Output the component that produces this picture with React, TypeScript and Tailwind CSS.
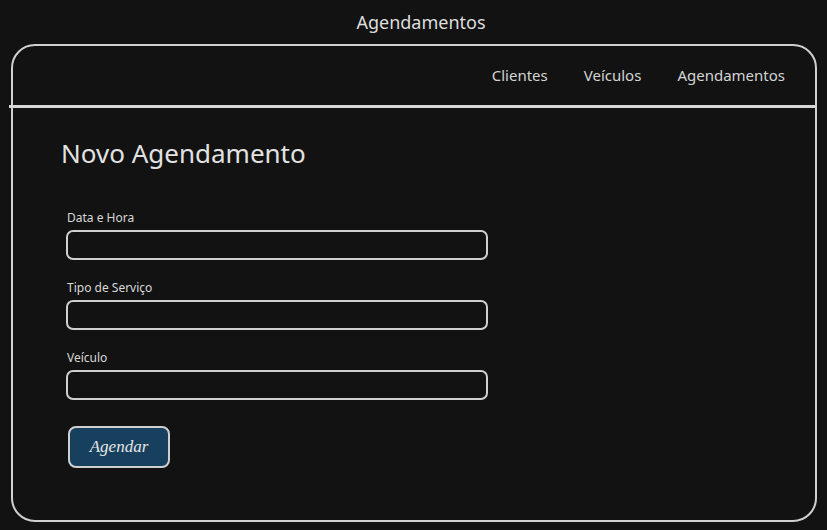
export default function App() {
  const fields = ["Data e Hora", "Tipo de Serviço", "Veículo"];

  return (
    <div
      className="w-[827px] h-[530px] bg-[#121212] text-[#dedede] overflow-hidden"
      style={{ fontFamily: '"Noto Sans", Lato, sans-serif' }}
    >
      <div className="h-[44px] flex items-center justify-center text-[18px] pl-[15px]">Agendamentos</div>

      <div className="ml-[11px] w-[806px] h-[478px] border-2 border-[#d0d0d0] rounded-[24px]">
        <nav className="h-[59px] flex items-center justify-end gap-9 pr-[30px] text-[15px] text-[#d4d4d4]">
          <span>Clientes</span>
          <span>Veículos</span>
          <span>Agendamentos</span>
        </nav>
        <div className="-ml-[4px] w-[806px] h-[3px] bg-[#d6d6d6]"></div>

        <div className="pl-[48px] pt-[27px]">
          <h1 className="text-[26px] leading-[36px] text-[#e2e2e2]">Novo Agendamento</h1>

          <form className="mt-[39px] flex flex-col gap-[20px]">
            {fields.map((label) => (
              <div key={label} className="flex flex-col">
                <label className="pl-[6px] text-[12px] leading-[16px] text-[#d8d8d8] mb-[4px]">{label}</label>
                <input
                  type="text"
                  className="ml-[5px] w-[422px] h-[30px] bg-transparent border-2 border-[#d0d0d0] rounded-[7px] outline-none"
                />
              </div>
            ))}

            <button
              type="button"
              className="mt-[6px] ml-[7px] w-[102px] h-[42px] bg-[#17405f] border-2 border-[#cfcfcf] rounded-[8px] text-[17px] text-[#e6e6e6] italic"
              style={{ fontFamily: '"Comic Sans MS", "Liberation Serif", cursive' }}
            >
              Agendar
            </button>
          </form>
        </div>
      </div>
    </div>
  );
}
